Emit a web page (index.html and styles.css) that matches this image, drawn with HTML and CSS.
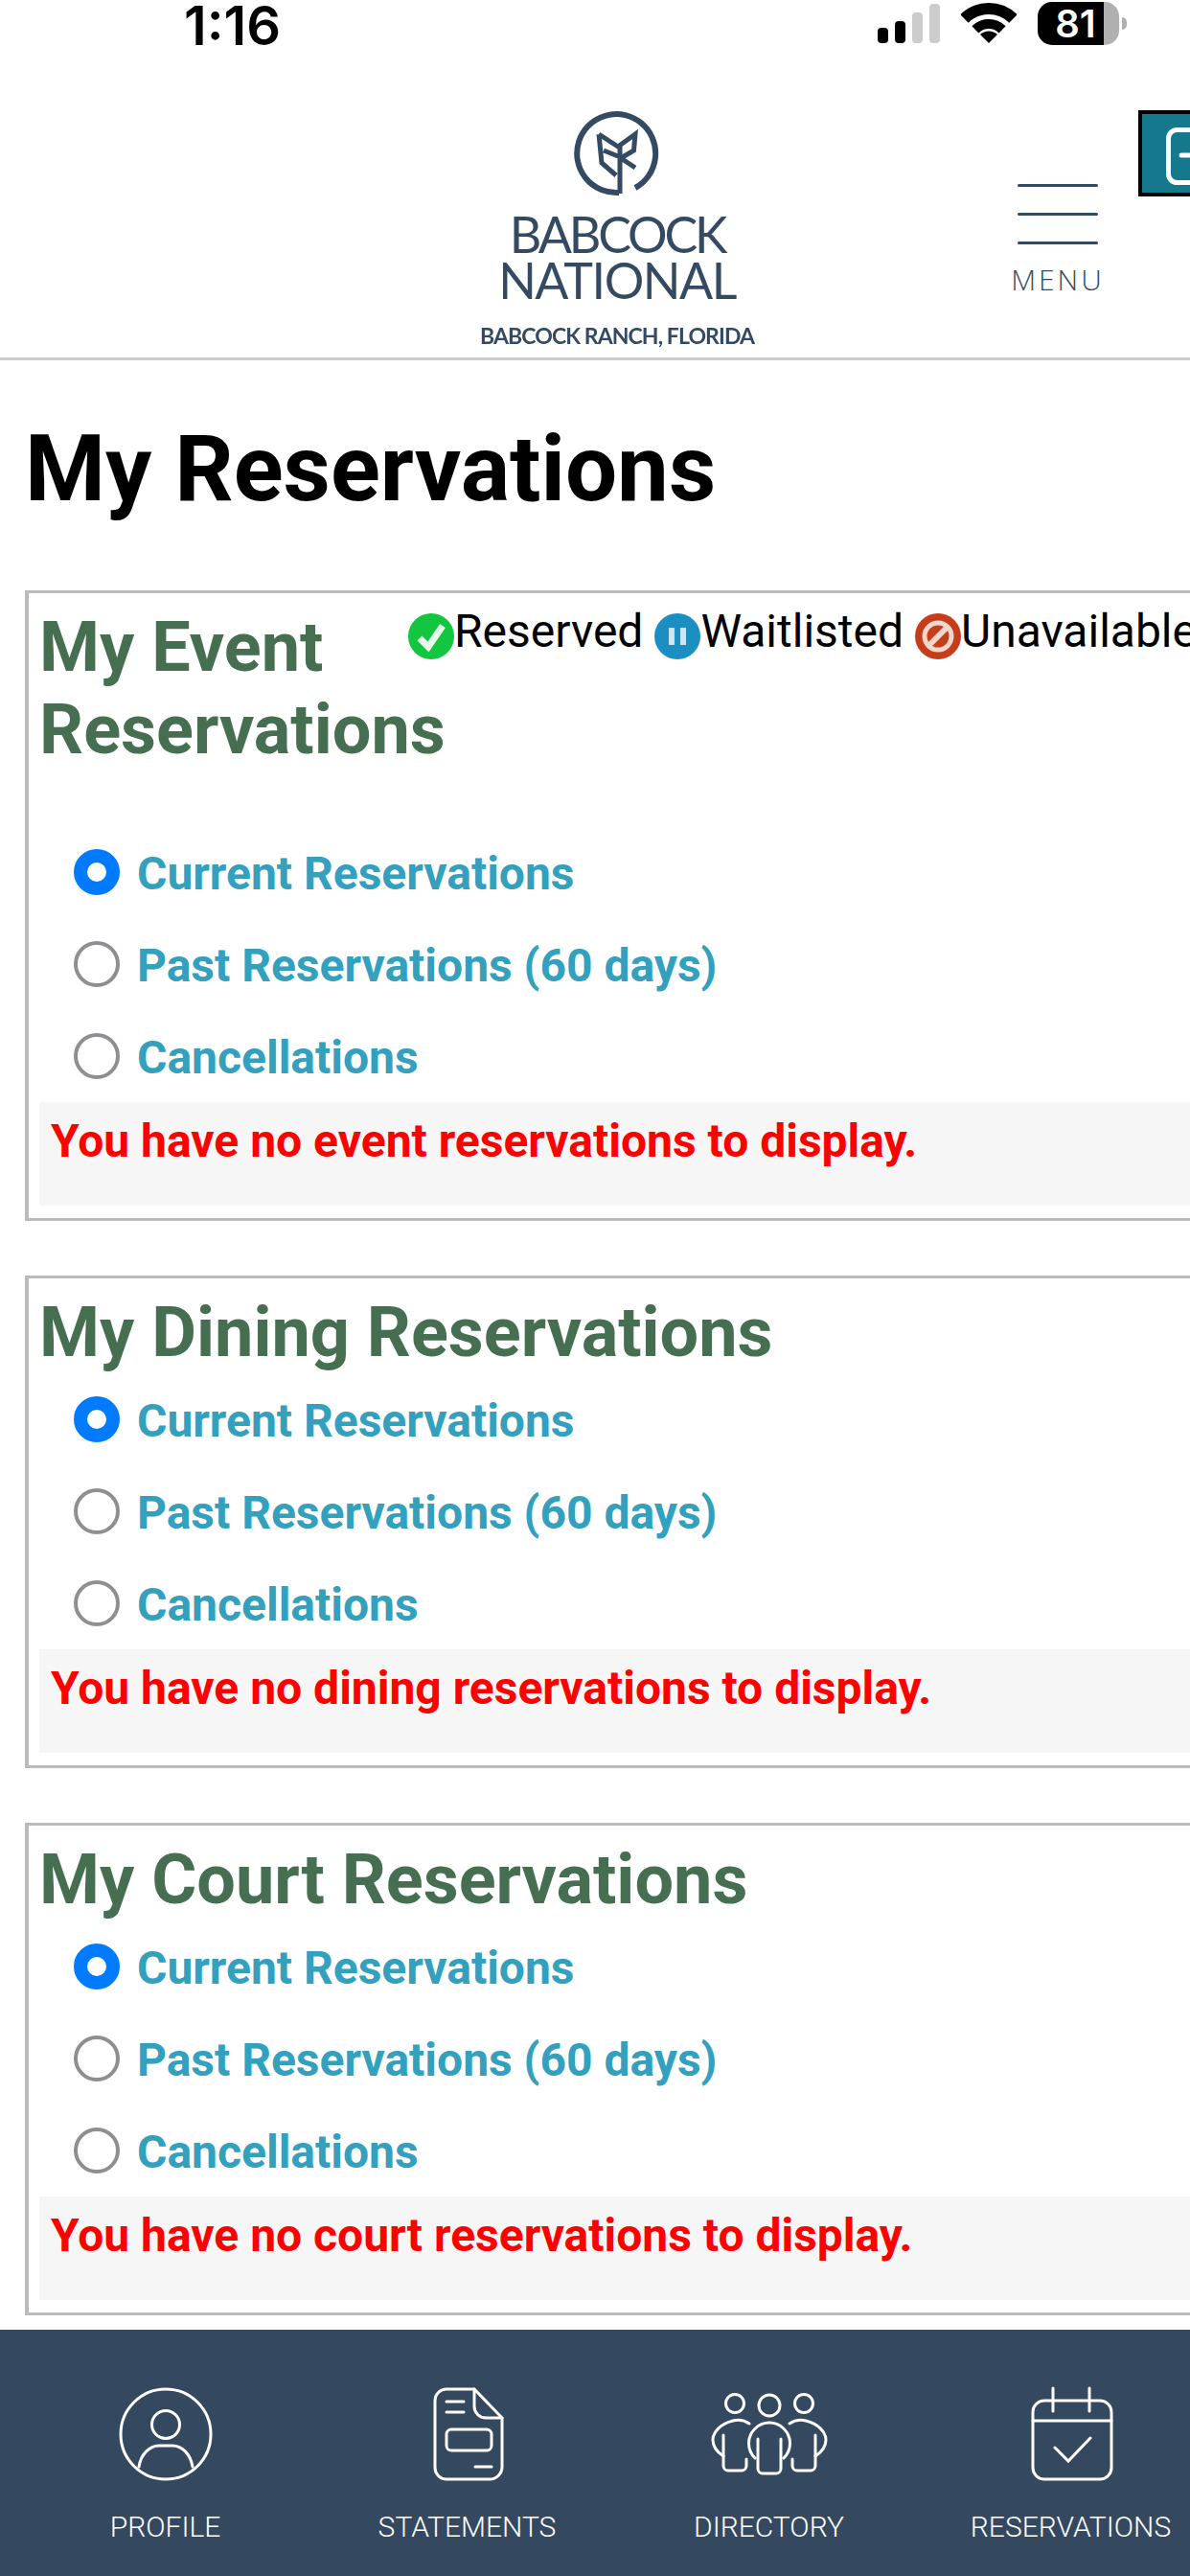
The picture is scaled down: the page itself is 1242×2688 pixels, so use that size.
FILE: index.html
```html
<!DOCTYPE html>
<html lang="en">

<head>
    <meta charset="UTF-8">
    <meta name="viewport" content="width=device-width, initial-scale=1.0">
    <title>My Reservations</title>
    <link rel="stylesheet" href="styles.css">
</head>

<body>
    <div class="statusbar">
        <span class="time">1:16</span>
        <div class="signal">
            <span class="bar bar1"></span>
            <span class="bar bar2"></span>
            <span class="bar bar3"></span>
            <span class="bar bar4"></span>
        </div>
        <svg class="wifi" viewBox="0 0 58 44">
            <path d="M3.5 17.5A36 36 0 0 1 54.5 17.5" fill="none" stroke="#000" stroke-width="12" />
            <path d="M14.9 28.9A20 20 0 0 1 43.1 28.9" fill="none" stroke="#000" stroke-width="10" />
            <path d="M29 43L20 34A13 13 0 0 1 38 34Z" fill="#000" />
        </svg>
        <div class="battery">
            <span class="battery-level">81</span>
        </div>
        <span class="battery-nub"></span>
    </div>

    <header class="header">
        <div class="logo">
            <svg class="logo-mark" viewBox="0 0 90 90">
                <path d="M47 86A41 41 0 1 1 64 81" fill="none" stroke="#344a62" stroke-width="6" />
                <path d="M48 87V38M26 25L46 38L64 25L62.500 42L49 50M26 25L29 55L44 68M31 42L46 48M49 50L64 60"
                    fill="none" stroke="#344a62" stroke-width="5" />
            </svg>
            <div class="logo-name">
                <span class="logo-line logo-line-top">BABCOCK</span>
                <span class="logo-line">NATIONAL</span>
            </div>
            <div class="logo-place">BABCOCK RANCH, FLORIDA</div>
        </div>
        <div class="menu">
            <span class="menu-line"></span>
            <span class="menu-line"></span>
            <span class="menu-line"></span>
            <span class="menu-label">MENU</span>
        </div>
        <div class="logout">
            <svg class="logout-icon" viewBox="0 0 60 60">
                <rect x="2.500" y="2.500" width="70" height="55" rx="9" fill="none" stroke="#fff" stroke-width="5" />
                <path d="M16 29H50" fill="none" stroke="#fff" stroke-width="5" stroke-linecap="round" />
            </svg>
        </div>
    </header>

    <main class="content">
        <h1 class="page-title">My Reservations</h1>

        <section class="res-box">
            <div class="res-head">
                <h2 class="res-title res-title-narrow">My Event Reservations</h2>
                <div class="legend">
                    <svg class="legend-icon" viewBox="0 0 48 48">
                        <circle cx="24" cy="24" r="24" fill="#12c63f" />
                        <path d="M12 26L21 35L36 13" fill="none" stroke="#e8f8ea" stroke-width="7" />
                    </svg>
                    <span class="legend-text">Reserved</span>
                    <svg class="legend-icon legend-gap" viewBox="0 0 48 48">
                        <circle cx="24" cy="24" r="24" fill="#1b8fc1" />
                        <path d="M18 15V33M30 15V33" fill="none" stroke="#cfe6f1" stroke-width="6" />
                    </svg>
                    <span class="legend-text">Waitlisted</span>
                    <svg class="legend-icon legend-gap" viewBox="0 0 48 48">
                        <circle cx="24" cy="24" r="24" fill="#c63d19" />
                        <circle cx="24" cy="24" r="14" fill="none" stroke="#f0d6cd" stroke-width="5" />
                        <path d="M15 33L33 15" fill="none" stroke="#f0d6cd" stroke-width="6" />
                    </svg>
                    <span class="legend-text">Unavailable</span>
                </div>
            </div>
            <label class="res-option"><span class="radio radio-on"></span>Current Reservations</label>
            <label class="res-option"><span class="radio"></span>Past Reservations (60 days)</label>
            <label class="res-option"><span class="radio"></span>Cancellations</label>
            <p class="res-empty">You have no event reservations to display.</p>
        </section>

        <section class="res-box">
            <h2 class="res-title">My Dining Reservations</h2>
            <label class="res-option"><span class="radio radio-on"></span>Current Reservations</label>
            <label class="res-option"><span class="radio"></span>Past Reservations (60 days)</label>
            <label class="res-option"><span class="radio"></span>Cancellations</label>
            <p class="res-empty">You have no dining reservations to display.</p>
        </section>

        <section class="res-box">
            <h2 class="res-title">My Court Reservations</h2>
            <label class="res-option"><span class="radio radio-on"></span>Current Reservations</label>
            <label class="res-option"><span class="radio"></span>Past Reservations (60 days)</label>
            <label class="res-option"><span class="radio"></span>Cancellations</label>
            <p class="res-empty">You have no court reservations to display.</p>
        </section>
    </main>

    <nav class="tabbar">
        <a class="tab">
            <svg class="tab-icon" viewBox="0 0 100 98">
                <ellipse cx="50" cy="49" rx="47" ry="47" />
                <circle cx="50" cy="39" r="14.5" />
                <path d="M22 83C24 70 33 61 43 61H57C67 61 76 70 78 83" />
            </svg>
            <span class="tab-label">PROFILE</span>
        </a>
        <a class="tab">
            <svg class="tab-icon" viewBox="-15 0 100 98">
                <path d="M13 2H42L71 32V83A13 13 0 0 1 58 96H13A12 12 0 0 1 1 84V14A12 12 0 0 1 13 2Z" />
                <path d="M42 2V20A12 12 0 0 0 54 32H71" />
                <path d="M13 15H31M13 26H31M43 83H60" />
                <rect x="13" y="44" width="47" height="22" rx="5" />
            </svg>
            <span class="tab-label">STATEMENTS</span>
        </a>
        <a class="tab">
            <svg class="tab-icon tab-icon-wide" viewBox="0 0 120 98">
                <circle cx="24" cy="17" r="9.500" />
                <circle cx="60" cy="19" r="11" />
                <circle cx="96" cy="17" r="9.500" />
                <path d="M39 38C33 34 26 34 22 35C9 38 1 47 1 55C1 62 6 68 12 72" />
                <path d="M12 50V82A5 5 0 0 0 17 87H31A5 5 0 0 0 36 82V75" />
                <path d="M45 74A21.500 21.500 0 1 1 75 74" />
                <path d="M48 54V85A5 5 0 0 0 53 90H67A5 5 0 0 0 72 85V54" />
                <path d="M81 38C87 34 94 34 98 35C111 38 119 47 119 55C119 62 114 68 108 72" />
                <path d="M108 50V82A5 5 0 0 1 103 87H89A5 5 0 0 1 84 82V75" />
            </svg>
            <span class="tab-label">DIRECTORY</span>
        </a>
        <a class="tab">
            <svg class="tab-icon" viewBox="-8 0 100 98">
                <rect x="2" y="14" width="82" height="82" rx="12" />
                <path d="M2 35H84M23 1V25M61 1V25M25 63L39 77L62 53" />
            </svg>
            <span class="tab-label">RESERVATIONS</span>
        </a>
    </nav>
</body>

</html>
```

FILE: styles.css
```css
body {
    margin: 0;
    width: 1242px;
    height: 2688px;
    overflow: hidden;
    display: flex;
    flex-direction: column;
    background-color: #fff;
    font-family: Roboto, "Liberation Sans", sans-serif;
}

/* phone status bar */
.statusbar {
    height: 50px;
    flex-shrink: 0;
    display: flex;
    align-items: flex-start;
    padding-left: 192px;
}

.time {
    width: 724px;
    margin-top: 2px;
    font-family: Inter, sans-serif;
    font-size: 56px;
    font-weight: 600;
    line-height: 50px;
    color: #000;
}

.signal {
    display: flex;
    align-items: flex-end;
    gap: 7px;
    height: 41px;
    margin-top: 4px;
}

.bar {
    width: 11px;
    border-radius: 4px;
    background-color: #000;
}

.bar1 {
    height: 16px;
}

.bar2 {
    height: 23px;
}

.bar3 {
    height: 32px;
    background-color: #ccc;
}

.bar4 {
    height: 41px;
    background-color: #ccc;
}

.wifi {
    width: 58px;
    height: 44px;
    margin-left: 22px;
    margin-top: 2px;
}

.battery {
    width: 69px;
    height: 45px;
    margin-left: 22px;
    margin-top: 2px;
    padding-right: 16px;
    border-radius: 15px;
    background: linear-gradient(to right, #000 69px, #b0b0b0 69px);
    text-align: center;
}

.battery-level {
    display: block;
    font-family: Inter, sans-serif;
    font-size: 40px;
    font-weight: 600;
    line-height: 46px;
    color: #fff;
    padding-left: 10px;
}

.battery-nub {
    width: 5px;
    height: 13px;
    margin-top: 18px;
    margin-left: 3px;
    border-radius: 0 6px 6px 0;
    background-color: #b0b0b0;
}

/* site header */
.header {
    height: 323px;
    flex-shrink: 0;
    display: flex;
    align-items: flex-start;
    box-sizing: content-box;
    padding-left: 494px;
    border-bottom: 3px solid #ccc;
    overflow: hidden;
}

.logo {
    width: 300px;
    flex-shrink: 0;
    margin-top: 65px;
    display: flex;
    flex-direction: column;
    align-items: center;
    color: #344a62;
    filter: blur(0.5px);
}

.logo-mark {
    width: 90px;
    height: 90px;
}

.logo-name {
    margin-top: 15px;
    font-family: Lato, sans-serif;
    font-size: 52px;
    line-height: 48px;
    text-align: center;
}

.logo-line {
    display: block;
    letter-spacing: -1.5px;
}

.logo-line-top {
    letter-spacing: -3.2px;
}

.logo-place {
    margin-top: 20px;
    font-family: Lato, sans-serif;
    font-size: 23px;
    font-weight: 700;
    line-height: 28px;
    letter-spacing: -0.9px;
    white-space: nowrap;
}

.menu {
    width: 90px;
    flex-shrink: 0;
    margin-top: 142px;
    margin-left: 265px;
    display: flex;
    flex-direction: column;
    align-items: center;
}

.menu-line {
    width: 84px;
    height: 3px;
    margin-bottom: 27px;
    border-radius: 2px;
    background-color: #344a62;
}

.menu-label {
    margin-top: -8px;
    font-family: "Open Sans", sans-serif;
    font-size: 30px;
    font-weight: 300;
    line-height: 36px;
    letter-spacing: 3px;
    color: #344a62;
}

.logout {
    width: 120px;
    height: 82px;
    flex-shrink: 0;
    margin-top: 65px;
    margin-left: 39px;
    border: 4px solid #000;
    background-color: #15788c;
}

.logout-icon {
    width: 60px;
    height: 60px;
    margin: 14px 0 0 25px;
    display: block;
    overflow: visible;
}

/* reservations */
.content {
    flex: 1;
    min-height: 0;
    overflow: hidden;
    padding-left: 26px;
}

.page-title {
    margin: 0;
    padding-top: 57px;
    padding-bottom: 71px;
    font-size: 96px;
    font-weight: 700;
    line-height: 112px;
    color: #000;
}

.res-box {
    width: 1400px;
    box-sizing: border-box;
    margin-bottom: 57px;
    padding: 14px 11px 13px;
    border: 3px solid #bbb;
    border-left-width: 4px;
}

.res-head {
    display: flex;
    align-items: flex-start;
    padding-bottom: 58px;
}

.res-title {
    margin: 0 0 -1px;
    font-size: 72px;
    font-weight: 700;
    line-height: 86px;
    color: #466f52;
}

.res-title-narrow {
    width: 385px;
    flex-shrink: 0;
}

.legend {
    display: flex;
    align-items: flex-start;
    margin-top: 7px;
}

.legend-icon {
    width: 48px;
    height: 48px;
    flex-shrink: 0;
    filter: blur(0.6px);
}

.legend-gap {
    margin-left: 12px;
}

.legend-text {
    font-size: 48px;
    line-height: 38px;
    color: #000;
    white-space: nowrap;
}

.res-option {
    display: flex;
    align-items: center;
    height: 96px;
    box-sizing: border-box;
    padding-top: 3px;
    padding-left: 36px;
    font-size: 48px;
    font-weight: 700;
    color: #33a0bd;
}

.radio {
    width: 48px;
    height: 48px;
    box-sizing: border-box;
    flex-shrink: 0;
    margin-right: 18px;
    margin-bottom: 3px;
    border: 4px solid #8e8e93;
    border-radius: 50%;
}

.radio-on {
    border: 14px solid #007aff;
}

.res-empty {
    margin: 0;
    padding: 5px 12px 31px;
    background-color: #f6f6f6;
    font-size: 48px;
    font-weight: 700;
    line-height: 72px;
    color: #f00;
}

/* bottom tabs */
.tabbar {
    height: 257px;
    flex-shrink: 0;
    display: grid;
    grid-template-columns: repeat(4, 315px);
    padding-left: 15px;
    overflow: hidden;
    background-color: #34495f;
}

.tab {
    display: flex;
    flex-direction: column;
    align-items: center;
    padding-top: 60px;
}

.tab-icon {
    width: 100px;
    height: 98px;
    overflow: visible;
    fill: none;
    stroke: #fff;
    stroke-width: 3;
    stroke-linecap: round;
}

.tab-icon-wide {
    width: 120px;
}

.tab-label {
    margin-top: 30px;
    font-size: 30px;
    font-weight: 300;
    line-height: 36px;
    color: #fff;
    white-space: nowrap;
}
```
